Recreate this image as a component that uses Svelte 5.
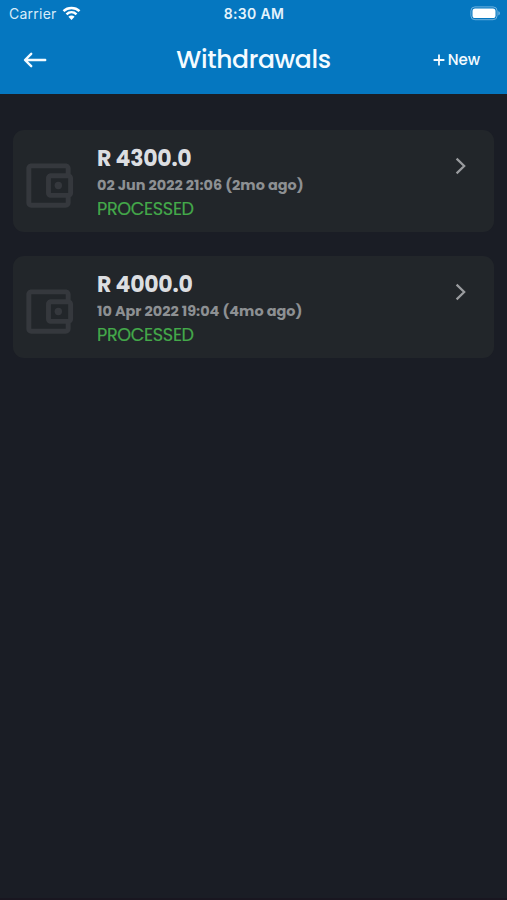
<script>

    // list data
    const withdrawals = [
        { amount: 'R 4300.0', date: '02 Jun 2022 21:06 (2mo ago)', status: 'PROCESSED' },
        { amount: 'R 4000.0', date: '10 Apr 2022 19:04 (4mo ago)', status: 'PROCESSED' },
    ];

</script>


<div class="screen">
    <header>

        <!-- Status bar -->
        <div class="status-bar">
            <div class="carrier">
                <span>Carrier</span>
                <svg class="wifi" viewBox="0 0 18 14">
                    <path d="M1 5.1C5.4 .9 12.6 .9 17 5.1" />
                    <path d="M4 8.3C6.9 5.6 11.1 5.6 14 8.3" />
                    <path class="solid" d="M5.9 10.8C7.7 9.2 10.3 9.2 12.1 10.8L9 14Z" />
                </svg>
            </div>
            <span class="clock">8:30 AM</span>
            <svg class="battery" viewBox="0 0 31 15">
                <rect class="shell" x="0.9" y="0.9" width="26.2" height="12.8" rx="4" />
                <rect class="level" x="2.5" y="2.5" width="23" height="9.6" rx="2.6" />
                <path class="tip" d="M28.3 5.2C30.5 5.8 30.5 8.8 28.3 9.4Z" />
            </svg>
        </div>

        <!-- Navigation -->
        <nav>
            <button class="back" aria-label="Back">
                <svg viewBox="0 0 24 16">
                    <path d="M8.2 1.8L2 8L8.2 14.2M2.4 8H22.2" />
                </svg>
            </button>
            <h1>Withdrawals</h1>
            <button class="new">
                <svg viewBox="0 0 12 12">
                    <path d="M6 .6V11.4M.6 6H11.4" />
                </svg>
                <span>New</span>
            </button>
        </nav>
    </header>

    <main>
        {#each withdrawals as { amount, date, status }}
            <div class="card">
                <svg class="wallet" viewBox="0 0 24 24">
                    <path d="M21 7.28V5c0-1.1-.9-2-2-2H5c-1.11 0-2 .9-2 2v14c0 1.1.89 2 2 2h14c1.1 0 2-.9 2-2v-2.28c.59-.35 1-.98 1-1.72V9c0-.74-.41-1.37-1-1.72zM20 9v6h-7V9h7zM5 19V5h14v2h-6c-1.1 0-2 .9-2 2v6c0 1.1.9 2 2 2h6v2H5z" />
                    <circle cx="16" cy="12" r="1.5" />
                </svg>
                <div class="details">
                    <span class="amount">{amount}</span>
                    <span class="date">{date}</span>
                    <span class="status">{status}</span>
                </div>
                <svg class="chevron" viewBox="0 0 12 18">
                    <path d="M1.6 1.6L9.2 9L1.6 16.4" />
                </svg>
            </div>
        {/each}
    </main>
</div>


<style>

    :global(body) {
        margin: 0;
        background: #1a1d25;
    }

    .screen {
        min-height: 900px;
        box-sizing: border-box;
        background: #1a1d25;
        border-bottom: 2px solid #191620;
        font-family: Poppins, Inter, sans-serif;
    }

    header {
        height: 94px;
        background: #0577c0;
        color: #f4fbff;
    }

    .status-bar {
        display: grid;
        grid-template-columns: 1fr auto 1fr;
        align-items: center;
        height: 27px;
        padding: 0 6px 0 9px;
        font-family: Inter, sans-serif;
        font-size: 14px;
    }

    .carrier {
        display: flex;
        align-items: center;
        gap: 5px;
        color: #d8ecf9;
        letter-spacing: 0.25px;
    }

    .wifi {
        width: 19px;
        height: 14px;
        margin-bottom: 1px;
        fill: none;
        stroke: #ffffff;
        stroke-width: 2.5;
    }

    .wifi .solid {
        fill: #ffffff;
        stroke: none;
    }

    .clock {
        margin-right: 2px;
        font-weight: 600;
        letter-spacing: 0.35px;
        color: #e4f3fc;
    }

    .battery {
        justify-self: end;
        width: 31px;
        height: 15px;
    }

    .shell {
        fill: none;
        stroke: #6fb2de;
        stroke-width: 1;
    }

    .level {
        fill: #ffffff;
    }

    .tip {
        fill: #6fb2de;
    }

    nav {
        display: grid;
        grid-template-columns: 1fr auto 1fr;
        align-items: center;
        height: 65px;
        padding: 0 27px 0 23px;
    }

    button {
        display: flex;
        align-items: center;
        padding: 0;
        border: none;
        background: none;
        color: inherit;
        font: inherit;
    }

    .back svg {
        width: 24px;
        height: 16px;
        fill: none;
        stroke: #f4fbff;
        stroke-width: 2.4;
        stroke-linecap: round;
        stroke-linejoin: round;
    }

    h1 {
        margin: 1px 0 0 4px;
        font-size: 25px;
        font-weight: 500;
        line-height: 36px;
        letter-spacing: -0.35px;
    }

    .new {
        justify-self: end;
        gap: 3px;
        font-size: 15px;
        font-weight: 500;
        letter-spacing: -0.1px;
    }

    .new svg {
        width: 12px;
        height: 12px;
        fill: none;
        stroke: #f4fbff;
        stroke-width: 1.8;
    }

    main {
        display: flex;
        flex-direction: column;
        gap: 24px;
        padding: 36px 13px;
    }

    .card {
        display: flex;
        align-items: flex-start;
        height: 102px;
        box-sizing: border-box;
        padding: 16px 27px 0 6px;
        border-radius: 11px;
        background: #22262a;
    }

    .wallet {
        flex: none;
        width: 59px;
        height: 59px;
        margin-top: 10px;
        fill: #35383d;
    }

    .details {
        display: flex;
        flex: 1;
        flex-direction: column;
        padding-left: 19px;
        white-space: nowrap;
    }

    .amount {
        font-size: 22px;
        font-weight: 700;
        line-height: 26px;
        letter-spacing: -0.25px;
        color: #dcdee1;
    }

    .date {
        font-size: 14.45px;
        font-weight: 700;
        line-height: 26px;
        color: #8d9093;
    }

    .status {
        font-size: 17.6px;
        font-weight: 400;
        line-height: 22px;
        letter-spacing: -0.3px;
        color: #44a94a;
        -webkit-text-stroke: 0.2px;
    }

    .chevron {
        width: 12px;
        height: 18px;
        margin-top: 11px;
        fill: none;
        stroke: #9a9c9f;
        stroke-width: 2.2;
    }

</style>
